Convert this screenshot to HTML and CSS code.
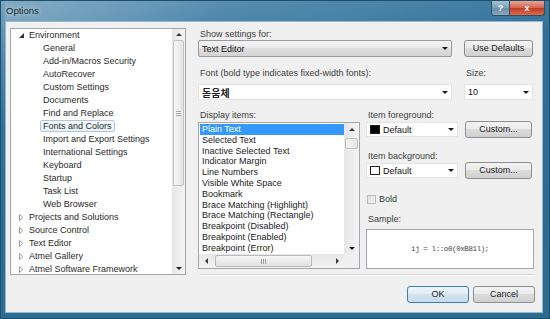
FILE: index.html
```html
<!DOCTYPE html>
<html lang="en">
<head>
	<meta charset="UTF-8">
	<title>Options</title>
	<link rel="stylesheet" href="styles.css">
</head>
<body>
	<div class="window">
		<div class="titlebar">
			<span class="title">Options</span>
			<div class="cap help">?</div>
			<div class="cap close">x</div>
		</div>
		<div class="client">
			<div class="main">
				<div class="tree">
					<ul class="tree-list">
						<li class="node"><svg class="exp" width="5" height="5" viewBox="0 0 5 5"><polygon points="5,0 5,5 0,5" fill="#333"/></svg>Environment</li>
						<li class="child">General</li>
						<li class="child">Add-in/Macros Security</li>
						<li class="child">AutoRecover</li>
						<li class="child">Custom Settings</li>
						<li class="child">Documents</li>
						<li class="child">Find and Replace</li>
						<li class="child"><span class="sel">Fonts and Colors</span></li>
						<li class="child">Import and Export Settings</li>
						<li class="child">International Settings</li>
						<li class="child">Keyboard</li>
						<li class="child">Startup</li>
						<li class="child">Task List</li>
						<li class="child">Web Browser</li>
						<li class="node"><svg class="exp" width="5" height="7" viewBox="0 0 5 7"><polygon points="0.5,0.5 4,3.5 0.5,6.5" fill="none" stroke="#a0a0a0"/></svg>Projects and Solutions</li>
						<li class="node"><svg class="exp" width="5" height="7" viewBox="0 0 5 7"><polygon points="0.5,0.5 4,3.5 0.5,6.5" fill="none" stroke="#a0a0a0"/></svg>Source Control</li>
						<li class="node"><svg class="exp" width="5" height="7" viewBox="0 0 5 7"><polygon points="0.5,0.5 4,3.5 0.5,6.5" fill="none" stroke="#a0a0a0"/></svg>Text Editor</li>
						<li class="node"><svg class="exp" width="5" height="7" viewBox="0 0 5 7"><polygon points="0.5,0.5 4,3.5 0.5,6.5" fill="none" stroke="#a0a0a0"/></svg>Atmel Gallery</li>
						<li class="node"><svg class="exp" width="5" height="7" viewBox="0 0 5 7"><polygon points="0.5,0.5 4,3.5 0.5,6.5" fill="none" stroke="#a0a0a0"/></svg>Atmel Software Framework</li>
					</ul>
					<div class="vscroll tree-scroll">
						<div class="arrow"><span class="tri-up"></span></div>
						<div class="thumb"><span class="grip-v"></span></div>
						<div class="track"></div>
						<div class="arrow"><span class="tri-down"></span></div>
					</div>
				</div>

				<div class="settings">
					<div class="label">Show settings for:</div>
					<div class="row">
						<div class="combo gray wide"><span class="value">Text Editor</span><span class="tri-down"></span></div>
						<div class="btn use-defaults">Use Defaults</div>
					</div>

					<div class="row labels">
						<div class="label wide-label">Font (bold type indicates fixed-width fonts):</div>
						<div class="label">Size:</div>
					</div>
					<div class="row">
						<div class="combo white wide font"><span class="value korean">돋움체</span><span class="tri-down"></span></div>
						<div class="combo white size"><span class="value">10</span><span class="tri-down"></span></div>
					</div>

					<div class="lower">
						<div class="items-col">
							<div class="label">Display items:</div>
							<div class="listbox">
								<ul class="items">
									<li class="picked">Plain Text</li>
									<li>Selected Text</li>
									<li>Inactive Selected Text</li>
									<li>Indicator Margin</li>
									<li>Line Numbers</li>
									<li>Visible White Space</li>
									<li>Bookmark</li>
									<li>Brace Matching (Highlight)</li>
									<li>Brace Matching (Rectangle)</li>
									<li>Breakpoint (Disabled)</li>
									<li>Breakpoint (Enabled)</li>
									<li>Breakpoint (Error)</li>
								</ul>
								<div class="vscroll list-vscroll">
									<div class="arrow"><span class="tri-up"></span></div>
									<div class="thumb small"></div>
									<div class="track"></div>
									<div class="arrow"><span class="tri-down"></span></div>
								</div>
								<div class="hscroll">
									<div class="arrow-h"><span class="tri-left"></span></div>
									<div class="thumb-h"><span class="grip-h"></span></div>
									<div class="track"></div>
									<div class="arrow-h"><span class="tri-right"></span></div>
								</div>
								<div class="corner"></div>
							</div>
						</div>

						<div class="colors-col">
							<div class="label">Item foreground:</div>
							<div class="color-row">
								<div class="combo white color"><span class="swatch black"></span><span class="value">Default</span><span class="tri-down"></span></div>
								<div class="btn custom">Custom...</div>
							</div>
							<div class="label gap">Item background:</div>
							<div class="color-row">
								<div class="combo white color"><span class="swatch"></span><span class="value">Default</span><span class="tri-down"></span></div>
								<div class="btn custom">Custom...</div>
							</div>
							<div class="check-row">
								<span class="checkbox"></span>
								<span>Bold</span>
							</div>
							<div class="label sample-label">Sample:</div>
							<div class="sample">ij = l::o0(0xB81l);</div>
						</div>
					</div>

					<div class="separator"></div>
				</div>
			</div>

			<div class="footer">
				<div class="btn ok">OK</div>
				<div class="btn">Cancel</div>
			</div>
		</div>
	</div>
</body>
</html>
```

FILE: styles.css
```css
* {
	box-sizing: border-box;
}

body {
	margin: 0;
	font-family: "Liberation Sans", Arial, sans-serif;
	font-size: 9px;
	color: #1e1e1e;
	background-color: #2a6c93;
}

ul, li {
	margin: 0;
	padding: 0;
	list-style: none;
}

/* window frame */
.window {
	width: 550px;
	height: 319px;
	padding: 0 6px 5px 4px;
	display: flex;
	flex-direction: column;
	border: 1px solid #1d4e6c;
	background: linear-gradient(170deg, #76a3c0 0%, #4f88ac 14%, #2e6f97 32%, #2a6b92 100%);
}

.titlebar {
	height: 20px;
	margin-right: -2px;
	display: flex;
	align-items: flex-start;
	background: linear-gradient(to right, rgba(150, 185, 205, 0.45), rgba(60, 120, 160, 0.1) 40%, rgba(0, 0, 0, 0) 60%);
}

.title {
	margin-left: 1px;
	line-height: 19px;
	font-size: 9.5px;
	color: #17232b;
	text-shadow: 0 0 4px rgba(215, 232, 243, 0.9), 0 0 8px rgba(215, 232, 243, 0.5);
	flex: 1;
}

.cap {
	height: 15px;
	color: #fff;
	font-weight: bold;
	text-align: center;
	line-height: 14px;
	font-size: 9px;
	border: 1px solid #2f4f66;
	border-top: none;
}

.help {
	width: 19px;
	border-radius: 0 0 0 3px;
	background: linear-gradient(#a9c2d3, #7e9fb6 50%, #6a8ea7 51%, #86a8be);
}

.close {
	width: 35px;
	border-left: none;
	border-radius: 0 0 3px 0;
	background: linear-gradient(#e9a494, #d3644f 50%, #c23a22 51%, #d96a4c);
}

.client {
	flex: 1;
	background-color: #f0f0f0;
	border: 1px solid #9ab6ca;
	padding: 6px 7px 0 4px;
}

.main {
	display: flex;
	height: 247px;
}

/* left tree */
.tree {
	width: 176px;
	border: 1px solid #a3a6ab;
	background-color: #fff;
	display: flex;
}

.tree-list {
	flex: 1;
	overflow: hidden;
	color: #2a2a2a;
}

.tree-list li {
	height: 13px;
	line-height: 13px;
	white-space: nowrap;
}

.tree-list .node {
	display: flex;
	align-items: center;
}

.tree-list .exp {
	margin-left: 8px;
	margin-right: 5px;
}

.tree-list .child {
	padding-left: 32px;
}

.tree-list .sel {
	display: inline-block;
	height: 12px;
	line-height: 10px;
	margin-left: -3px;
	padding: 0 2px;
	border: 1px solid #a9c8e3;
	border-radius: 2px;
	background: linear-gradient(#f7fbfe, #e9f2fa);
}

/* scrollbars */
.vscroll {
	display: flex;
	flex-direction: column;
	background: linear-gradient(to right, #e6e6e6, #f4f4f4);
}

.tree-scroll {
	width: 13px;
}

.vscroll .arrow {
	height: 11px;
	display: flex;
	align-items: center;
	justify-content: center;
}

.vscroll .thumb {
	height: 146px;
	margin: 0 1px;
	border: 1px solid #c2c2c2;
	border-radius: 2px;
	background: linear-gradient(to right, #f6f6f6, #e3e3e3);
	display: flex;
	align-items: center;
	justify-content: center;
}

.vscroll .thumb.small {
	height: 11px;
	margin-top: 3px;
}

.vscroll .track {
	flex: 1;
}

.grip-v {
	width: 5px;
	height: 5px;
	border-top: 1px solid #a4a4a4;
	border-bottom: 1px solid #a4a4a4;
	background: linear-gradient(#f6f6f6 40%, #a4a4a4 40%, #a4a4a4 60%, #f6f6f6 60%);
}

.tri-up, .tri-down, .tri-left, .tri-right {
	display: inline-block;
	width: 0;
	height: 0;
}

.tri-up {
	border-left: 3px solid transparent;
	border-right: 3px solid transparent;
	border-bottom: 3px solid #3c3c3c;
}

.tri-down {
	border-left: 3px solid transparent;
	border-right: 3px solid transparent;
	border-top: 3px solid #1a1a1a;
}

.tri-left {
	border-top: 3px solid transparent;
	border-bottom: 3px solid transparent;
	border-right: 3px solid #3c3c3c;
}

.tri-right {
	border-top: 3px solid transparent;
	border-bottom: 3px solid transparent;
	border-left: 3px solid #3c3c3c;
}

/* right side */
.settings {
	width: 337px;
	margin-left: 12px;
	display: flex;
	flex-direction: column;
}

.label {
	height: 12px;
	line-height: 12px;
	padding-left: 2px;
	color: #3c3c3c;
	white-space: nowrap;
}

.row {
	display: flex;
	gap: 12px;
}

.row.labels {
	margin-top: 10px;
	gap: 0;
}

.wide-label {
	width: 266px;
}

.combo {
	display: flex;
	align-items: center;
	color: #111;
}

.combo .value {
	flex: 1;
	padding-left: 3px;
}

.combo .tri-down {
	margin-right: 3px;
}

.combo.gray {
	height: 17px;
	border: 1px solid #9a9a9a;
	border-radius: 2px;
	background: linear-gradient(#f3f3f3, #ebebeb 45%, #dedede 50%, #d4d4d4);
}

.combo.white {
	background-color: #fff;
	border: 1px solid #e4e4e4;
}

.wide {
	width: 254px;
}

.font {
	margin-top: 5px;
	height: 16px;
}

.size {
	margin-top: 5px;
	width: 69px;
	height: 16px;
}

.korean {
	font-family: "Noto Sans CJK KR", sans-serif;
	font-weight: bold;
	font-size: 10px;
	color: #222;
}

.btn {
	height: 17px;
	line-height: 15px;
	text-align: center;
	border: 1px solid #8e8e8e;
	border-radius: 3px;
	background: linear-gradient(#f3f3f3, #ebebeb 45%, #dcdcdc 50%, #d0d0d0);
	color: #222;
}

.use-defaults {
	width: 69px;
}

.lower {
	display: flex;
	margin-top: 9px;
}

.items-col {
	width: 162px;
}

.listbox {
	margin-top: 1px;
	height: 147px;
	border: 1px solid #a3a6ab;
	background-color: #fff;
	display: grid;
	grid-template-columns: 1fr 15px;
	grid-template-rows: 1fr 14px;
}

.items {
	overflow: hidden;
	padding: 1px 0 0 1px;
	color: #1a1a1a;
}

.items li {
	height: 10.8px;
	line-height: 10.8px;
	padding-left: 2px;
	white-space: nowrap;
}

.items .picked {
	background-color: #3399ff;
	color: #fff;
}

.list-vscroll .arrow:first-child {
	margin-top: 1px;
}

.hscroll {
	display: flex;
	align-items: center;
	background: linear-gradient(#e6e6e6, #f4f4f4);
}

.hscroll .arrow-h {
	width: 14px;
	display: flex;
	justify-content: center;
}

.hscroll .thumb-h {
	width: 97px;
	height: 12px;
	margin-left: 2px;
	border: 1px solid #b9b9b9;
	border-radius: 2px;
	background: linear-gradient(#f6f6f6, #e0e0e0);
	display: flex;
	align-items: center;
	justify-content: center;
}

.grip-h {
	width: 5px;
	height: 5px;
	border-left: 1px solid #9a9a9a;
	border-right: 1px solid #9a9a9a;
	background: linear-gradient(to right, #f0f0f0 40%, #9a9a9a 40%, #9a9a9a 60%, #f0f0f0 60%);
}

.hscroll .track {
	flex: 1;
}

.corner {
	background-color: #f0f0f0;
}

.colors-col {
	width: 168px;
	margin-left: 6px;
}

.color-row {
	display: flex;
	align-items: center;
	height: 17px;
}

.combo.color {
	width: 92px;
	height: 15px;
}

.swatch {
	width: 10px;
	height: 9px;
	margin-left: 3px;
	border: 1px solid #222;
	background-color: #fff;
}

.swatch.black {
	background-color: #000;
}

.custom {
	width: 67px;
	margin-left: 7px;
}

.label.gap {
	margin-top: 12px;
}

.check-row {
	margin-top: 14px;
	height: 12px;
	display: flex;
	align-items: center;
	gap: 3px;
	color: #3c3c3c;
}

.checkbox {
	width: 9px;
	height: 9px;
	margin-left: 1px;
	border: 1px solid #bcbcbc;
	background: linear-gradient(135deg, #dcdcdc, #f6f6f6);
}

.sample-label {
	margin-top: 8px;
}

.sample {
	margin-top: 4px;
	height: 40px;
	border: 1px solid #a3a6ab;
	background-color: #fff;
	display: flex;
	align-items: center;
	justify-content: center;
	font-family: "Liberation Mono", monospace;
	font-size: 7.5px;
	letter-spacing: -0.4px;
	color: #444;
}

.separator {
	margin-top: 5px;
	margin-left: 2px;
	border-top: 1px solid #d6d6d6;
	border-bottom: 1px solid #fff;
}

.footer {
	display: flex;
	justify-content: flex-end;
	gap: 4px;
	padding-top: 11px;
}

.footer .btn {
	width: 62px;
}

.footer .ok {
	border-color: #3d7fae;
	background: linear-gradient(#eef6fb, #e0ecf4 45%, #d3e4ef 50%, #c9dcea);
}
```
